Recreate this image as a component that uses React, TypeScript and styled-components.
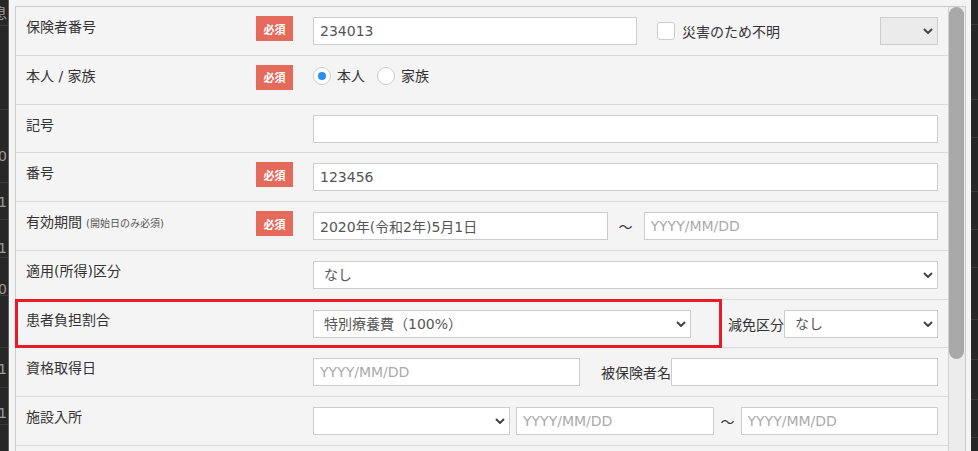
import React from 'react'
import styled, { createGlobalStyle } from 'styled-components'

const GlobalStyle = createGlobalStyle`
  html,
  body {
    margin: 0;
    height: 100%;
    overflow: hidden;
    background: #282828;
  }
  body {
    font-family: 'DejaVu Sans', 'Noto Sans CJK JP', sans-serif;
    font-size: 14px;
    color: #333;
  }
  #root {
    height: 100%;
  }
`

const Page = styled.div`
  display: flex;
  height: 100%;
`

// dimmed list page behind the dialog
const Backdrop = styled.div<{ $width: number }>`
  width: ${(p) => p.$width}px;
  flex-shrink: 0;
  display: flex;
  flex-direction: column;
  background: #272727;
  overflow: hidden;
`
const BackdropRow = styled.div<{ $h: number; $pt?: number }>`
  height: ${(p) => p.$h}px;
  flex-shrink: 0;
  box-sizing: border-box;
  padding: ${(p) => p.$pt ?? 0}px 1px 0 0;
  border-bottom: 1px solid #3a3a3a;
  display: flex;
  justify-content: flex-end;
  align-items: flex-start;
  overflow: hidden;
  color: #9c9c9c;
  font-size: 14px;
  line-height: 14px;
  white-space: nowrap;
`

const Modal = styled.div`
  flex: 1;
  min-width: 0;
  display: flex;
  flex-direction: column;
  background: #f4f4f4;
  border-left: 1px solid #5e5e5e;
  padding: 6px 5px 0 6px;
`
const Frame = styled.div`
  flex: 1;
  display: flex;
  border: 1px solid #cbcbcb;
  border-bottom: none;
`
const Table = styled.div`
  flex: 1;
  min-width: 0;
  display: flex;
  flex-direction: column;
`
const ScrollTrack = styled.div`
  width: 16px;
  flex-shrink: 0;
  background: #ececec;
  border-left: 1px solid #d2d2d2;
`
const ScrollThumb = styled.div`
  width: 15px;
  height: 352px;
  border-radius: 8px;
  background: #a8a8a8;
`

const Row = styled.div`
  position: relative;
  flex-shrink: 0;
  display: grid;
  grid-template-columns: 230px 57px 1fr;
  align-items: start;
  height: 48.78px;
  box-sizing: border-box;
  padding: 10px 10px 0;
  border-bottom: 1px solid #dadada;
`
const Highlight = styled.div`
  position: absolute;
  left: -1px;
  top: -1px;
  bottom: -1px;
  width: 707px;
  box-sizing: border-box;
  border: 3px solid #ea1b24;
  pointer-events: none;
`
const Label = styled.div`
  grid-column: 1;
  line-height: 20px;
  white-space: nowrap;
  color: #333;
`
const Note = styled.span`
  margin-left: 4px;
  font-size: 10px;
  color: #555;
`
const Badge = styled.span`
  grid-column: 2;
  width: 37px;
  height: 25px;
  margin-top: -1px;
  display: flex;
  align-items: center;
  justify-content: center;
  background: #e46a5c;
  color: #fff;
  font-size: 11px;
  font-weight: 700;
`
const Field = styled.div`
  grid-column: 3;
  display: flex;
  align-items: center;
  height: 28px;
  min-width: 0;
`
const TextInput = styled.input<{ $w?: number }>`
  ${(p) => (p.$w ? `width: ${p.$w}px; flex: none;` : 'width: 0; flex: 1;')}
  height: 28px;
  box-sizing: border-box;
  margin: 0;
  border: 1px solid #ccc;
  border-radius: 0;
  background: #fff;
  padding: 0 6px;
  font: inherit;
  font-size: 14px;
  color: #555;
  outline: none;
  &::placeholder {
    color: #aaa;
  }
`
const SelectBox = styled.div<{ $w?: number; $push?: boolean; $gapRight?: number }>`
  position: relative;
  display: flex;
  ${(p) => (p.$w ? `width: ${p.$w}px; flex: none;` : 'width: 0; flex: 1;')}
  margin-left: ${(p) => (p.$push ? 'auto' : '0')};
  margin-right: ${(p) => p.$gapRight ?? 0}px;
`
const Select = styled.select<{ $muted?: boolean }>`
  appearance: none;
  width: 100%;
  height: 28px;
  box-sizing: border-box;
  margin: 0;
  border: 1px solid #ccc;
  border-radius: 0;
  background: ${(p) => (p.$muted ? '#ebebeb' : '#fff')};
  padding: 0 24px 0 10px;
  font: inherit;
  font-size: 14px;
  color: #555;
  outline: none;
`
const Chevron = styled.svg`
  position: absolute;
  right: 5px;
  top: 50%;
  margin-top: -3px;
  pointer-events: none;
`
const Tilde = styled.span<{ $l: number; $r: number }>`
  margin: 0 ${(p) => p.$r}px 0 ${(p) => p.$l}px;
  font-family: 'Noto Sans CJK JP', sans-serif;
  color: #333;
  flex: none;
`
const Caption = styled.span<{ $l?: number; $r?: number }>`
  margin: 0 ${(p) => p.$r ?? 0}px 0 ${(p) => p.$l ?? 0}px;
  white-space: nowrap;
  color: #333;
  flex: none;
`
const CheckBox = styled.input.attrs({ type: 'checkbox' })`
  appearance: none;
  margin: 0 0 0 20px;
  width: 18px;
  height: 18px;
  box-sizing: border-box;
  border: 1px solid #ccc;
  border-radius: 3px;
  background: #fff;
  flex: none;
`
const RadioGroup = styled.div`
  grid-column: 3;
  display: flex;
  align-items: center;
  height: 20px;
`
const RadioOption = styled.label`
  display: flex;
  align-items: center;
  margin-right: 12px;
  line-height: 20px;
`
const Radio = styled.input.attrs({ type: 'radio' })`
  appearance: none;
  margin: 0 6px 0 0;
  width: 18px;
  height: 18px;
  box-sizing: border-box;
  border: 1px solid #ccc;
  border-radius: 50%;
  background: #fff;
  display: grid;
  place-content: center;
  &::before {
    content: '';
    width: 8px;
    height: 8px;
    border-radius: 50%;
  }
  &:checked::before {
    background: #2b8ef0;
  }
`

const leftRows = [
  { h: 26, t: '息', pt: 6 },
  { h: 84 },
  { h: 73, t: '0', pt: 39 },
  { h: 37, t: '1', pt: 12 },
  { h: 38, t: '1', pt: 21 },
  { h: 38, t: '00', pt: 24 },
  { h: 52 },
  { h: 40, t: '1', pt: 14 },
  { h: 37, t: '1', pt: 18 },
  { h: 40 },
]
const rightRows = [25, 75, 38, 54, 38, 38, 52, 40, 40, 38, 40]

const Arrow = () => (
  <Chevron width="10" height="6" viewBox="0 0 10 6">
    <path d="M1 1l4 4 4-4" fill="none" stroke="#444" strokeWidth="2" />
  </Chevron>
)

const Dropdown = ({
  value,
  w,
  push,
  gapRight,
  muted,
}: {
  value?: string
  w?: number
  push?: boolean
  gapRight?: number
  muted?: boolean
}) => (
  <SelectBox $w={w} $push={push} $gapRight={gapRight}>
    <Select $muted={muted} defaultValue={value ?? ''}>
      <option value={value ?? ''}>{value ?? ''}</option>
    </Select>
    <Arrow />
  </SelectBox>
)

const Required = () => <Badge>必須</Badge>

const App = () => {
  return (
    <>
      <GlobalStyle />
      <Page>
        <Backdrop $width={8}>
          {leftRows.map((r, i) => (
            <BackdropRow key={i} $h={r.h} $pt={r.pt}>
              {r.t}
            </BackdropRow>
          ))}
        </Backdrop>
        <Modal>
          <Frame>
            <Table>
              <Row>
                <Label>保険者番号</Label>
                <Required />
                <Field>
                  <TextInput $w={324} defaultValue="234013" />
                  <CheckBox />
                  <Caption $l={7}>災害のため不明</Caption>
                  <Dropdown w={58} push muted />
                </Field>
              </Row>
              <Row>
                <Label>本人 / 家族</Label>
                <Required />
                <RadioGroup>
                  <RadioOption>
                    <Radio name="relation" defaultChecked />
                    本人
                  </RadioOption>
                  <RadioOption>
                    <Radio name="relation" />
                    家族
                  </RadioOption>
                </RadioGroup>
              </Row>
              <Row>
                <Label>記号</Label>
                <Field>
                  <TextInput />
                </Field>
              </Row>
              <Row>
                <Label>番号</Label>
                <Required />
                <Field>
                  <TextInput defaultValue="123456" />
                </Field>
              </Row>
              <Row>
                <Label>
                  有効期間<Note>(開始日のみ必須)</Note>
                </Label>
                <Required />
                <Field>
                  <TextInput defaultValue="2020年(令和2年)5月1日" />
                  <Tilde $l={11} $r={11}>〜</Tilde>
                  <TextInput placeholder="YYYY/MM/DD" />
                </Field>
              </Row>
              <Row>
                <Label>適用(所得)区分</Label>
                <Field>
                  <Dropdown value="なし" />
                </Field>
              </Row>
              <Row>
                <Label>患者負担割合</Label>
                <Field>
                  <Dropdown value="特別療養費（100%）" w={378} />
                  <Caption $l={37}>減免区分</Caption>
                  <Dropdown value="なし" />
                </Field>
                <Highlight />
              </Row>
              <Row>
                <Label>資格取得日</Label>
                <Field>
                  <TextInput placeholder="YYYY/MM/DD" />
                  <Caption $l={21}>被保険者名</Caption>
                  <TextInput />
                </Field>
              </Row>
              <Row>
                <Label>施設入所</Label>
                <Field>
                  <Dropdown w={197} gapRight={6} />
                  <TextInput placeholder="YYYY/MM/DD" />
                  <Tilde $l={7} $r={6}>〜</Tilde>
                  <TextInput placeholder="YYYY/MM/DD" />
                </Field>
              </Row>
              <Row />
            </Table>
            <ScrollTrack>
              <ScrollThumb />
            </ScrollTrack>
          </Frame>
        </Modal>
        <Backdrop $width={7}>
          {rightRows.map((h, i) => (
            <BackdropRow key={i} $h={h} />
          ))}
        </Backdrop>
      </Page>
    </>
  )
}

export default App
